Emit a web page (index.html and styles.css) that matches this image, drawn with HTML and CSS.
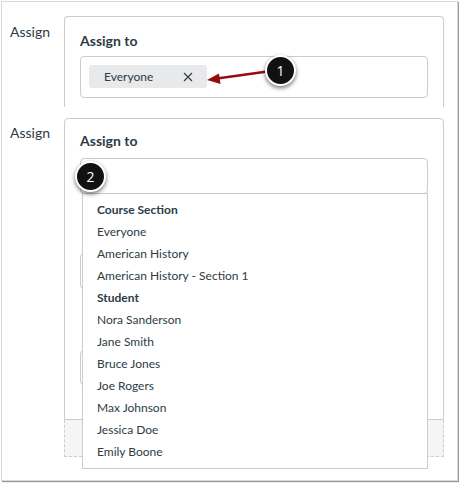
FILE: index.html
```html
<!DOCTYPE html>
<html>
<head>
<meta charset="utf-8">
<link rel="stylesheet" href="styles.css">
</head>
<body>
<div class="frame">
  <div class="row row-first">
    <div class="label">Assign</div>
    <div class="col">
      <div class="panel panel-cut">
        <div class="heading">Assign to</div>
        <div class="input input-tags">
          <span class="tag">Everyone
            <svg class="tag-x" width="10" height="10" viewBox="0 0 10 10"><path d="M1 1L9 9M9 1L1 9" stroke="#2d3b45" stroke-width="1.1" fill="none"/></svg>
          </span>
        </div>
      </div>
    </div>
  </div>
  <div class="row row-second">
    <div class="label">Assign</div>
    <div class="col">
      <div class="panel panel-full">
        <div class="heading">Assign to</div>
        <div class="input input-empty">
          <div class="badge badge-two">2</div>
          <ul class="menu">
            <li class="group">Course Section</li>
            <li>Everyone</li>
            <li>American History</li>
            <li>American History - Section 1</li>
            <li class="group">Student</li>
            <li>Nora Sanderson</li>
            <li>Jane Smith</li>
            <li>Bruce Jones</li>
            <li>Joe Rogers</li>
            <li>Max Johnson</li>
            <li>Jessica Doe</li>
            <li>Emily Boone</li>
          </ul>
        </div>
        <div class="ghost ghost-a"></div>
        <div class="ghost ghost-b"></div>
      </div>
      <div class="addbox"></div>
    </div>
  </div>
</div>
<svg class="arrow" width="80" height="24" viewBox="0 0 80 24">
  <path d="M12 13.5L66 6" stroke="#9b0a0a" stroke-width="2.6" fill="none"/>
  <path d="M2 15L14 8.5L15.5 19Z" fill="#9b0a0a"/>
</svg>
<div class="badge badge-one">1</div>
</body>
</html>
```

FILE: styles.css
```css
html, body {
  margin: 0;
  padding: 0;
  background: #fff;
}
body {
  position: relative;
  width: 459px;
  height: 483px;
  font-family: Lato, "Open Sans", sans-serif;
  color: #2d3b45;
}
.frame {
  box-sizing: border-box;
  margin: 1px 0 0 1px;
  width: 457px;
  height: 480px;
  border: 1px solid #d8d8d8;
  box-shadow: 1px 1px 1px #9a9a9a;
  padding-top: 14px;
  overflow: hidden;
}
.row {
  display: flex;
  padding-left: 8px;
}
.row-second {
  margin-top: 11px;
}
.label {
  flex: 0 0 54px;
  font-size: 14px;
  line-height: 17px;
  margin-top: 7px;
}
.row-second .label {
  margin-top: 6px;
}
.col {
  display: flex;
  flex-direction: column;
  width: 380px;
}
.panel {
  box-sizing: border-box;
  border: 1px solid #c7cdd1;
  border-radius: 4px 4px 0 0;
  padding: 15px 15px 0;
}
.panel-cut {
  height: 91px;
  border-bottom: none;
}
.panel-full {
  height: 302px;
  padding-top: 13px;
}
.heading {
  font-size: 14px;
  font-weight: bold;
  line-height: 18px;
  margin-bottom: 6px;
}
.panel-full .heading {
  margin-bottom: 8px;
}
.input {
  box-sizing: border-box;
  border: 1px solid #c7cdd1;
  border-radius: 4px;
  position: relative;
}
.input-tags {
  height: 42px;
  padding: 8px;
}
.input-empty {
  height: 36px;
}
.tag {
  box-sizing: border-box;
  display: flex;
  align-items: center;
  justify-content: space-between;
  width: 118px;
  height: 23px;
  padding: 0 14px 0 15px;
  background: #e7e9eb;
  border-radius: 3px;
  font-size: 12px;
}
.tag-x {
  display: block;
}
.ghost {
  box-sizing: border-box;
  border: 1px solid #c7cdd1;
  border-radius: 4px;
}
.ghost-a {
  margin-top: 59px;
  height: 36px;
}
.ghost-b {
  margin-top: 61px;
  height: 35px;
}
.addbox {
  box-sizing: border-box;
  height: 37px;
  background: #f5f5f5;
  border: 1px dashed #c7cdd1;
  border-top: none;
}
.menu {
  position: absolute;
  z-index: 5;
  left: 1px;
  top: 100%;
  box-sizing: border-box;
  width: 346px;
  height: 276px;
  margin: 0;
  padding: 5px 0 0;
  list-style: none;
  background: #fff;
  border: 1px solid #c7cdd1;
}
.menu li {
  height: 22px;
  line-height: 22px;
  padding-left: 14px;
  font-size: 12px;
}
.menu li.group {
  font-weight: bold;
}
.badge {
  position: absolute;
  z-index: 6;
  box-sizing: border-box;
  width: 31px;
  height: 31px;
  border-radius: 50%;
  background: #111;
  border: 2px solid #fff;
  box-shadow: 0 2px 4px rgba(0,0,0,.55);
  color: #fff;
  font-size: 14px;
  line-height: 27px;
  text-align: center;
  font-family: "Open Sans", Lato, sans-serif;
}
.badge-two {
  left: -6px;
  top: 2px;
}
.badge-one {
  left: 265px;
  top: 55px;
}
.arrow {
  position: absolute;
  left: 205px;
  top: 65px;
  z-index: 4;
}
```
